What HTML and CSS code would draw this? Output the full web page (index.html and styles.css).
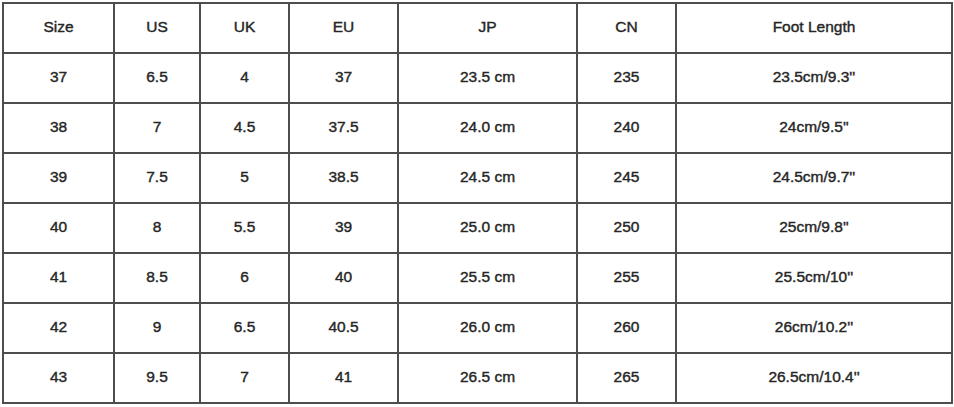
FILE: index.html
```html
<!DOCTYPE html>
<html>
<head>
<meta charset="utf-8">
<link rel="stylesheet" href="styles.css">
</head>
<body>
<table class="size-chart">
  <colgroup>
    <col class="c1"><col class="c2"><col class="c3"><col class="c4"><col class="c5"><col class="c6"><col class="c7">
  </colgroup>
  <thead>
    <tr><th>Size</th><th>US</th><th>UK</th><th>EU</th><th>JP</th><th>CN</th><th>Foot Length</th></tr>
  </thead>
  <tbody>
    <tr><td>37</td><td>6.5</td><td>4</td><td>37</td><td>23.5 cm</td><td>235</td><td>23.5cm/9.3''</td></tr>
    <tr><td>38</td><td>7</td><td>4.5</td><td>37.5</td><td>24.0 cm</td><td>240</td><td>24cm/9.5''</td></tr>
    <tr><td>39</td><td>7.5</td><td>5</td><td>38.5</td><td>24.5 cm</td><td>245</td><td>24.5cm/9.7''</td></tr>
    <tr><td>40</td><td>8</td><td>5.5</td><td>39</td><td>25.0 cm</td><td>250</td><td>25cm/9.8''</td></tr>
    <tr><td>41</td><td>8.5</td><td>6</td><td>40</td><td>25.5 cm</td><td>255</td><td>25.5cm/10''</td></tr>
    <tr><td>42</td><td>9</td><td>6.5</td><td>40.5</td><td>26.0 cm</td><td>260</td><td>26cm/10.2''</td></tr>
    <tr><td>43</td><td>9.5</td><td>7</td><td>41</td><td>26.5 cm</td><td>265</td><td>26.5cm/10.4''</td></tr>
  </tbody>
</table>
</body>
</html>
```
FILE: styles.css
```css
html, body {
  margin: 0;
  padding: 0;
  background: #ffffff;
}
body {
  padding: 2px 0 0 2px;
  font-family: "Liberation Sans", Arial, sans-serif;
}
.size-chart {
  border-collapse: collapse;
  table-layout: fixed;
  width: 949px;
  color: #262626;
  font-size: 15.5px;
  font-weight: 400;
  -webkit-text-stroke: 0.4px #262626;
}
.size-chart th,
.size-chart td {
  border: 2px solid #4d4d4d;
  height: 46px;
  padding: 0 0 2px 0;
  text-align: center;
  vertical-align: middle;
  font-weight: 400;
}
.c1 { width: 111px; }
.c2 { width: 86px; }
.c3 { width: 89px; }
.c4 { width: 109px; }
.c5 { width: 179px; }
.c6 { width: 99px; }
.c7 { width: 276px; }
```
